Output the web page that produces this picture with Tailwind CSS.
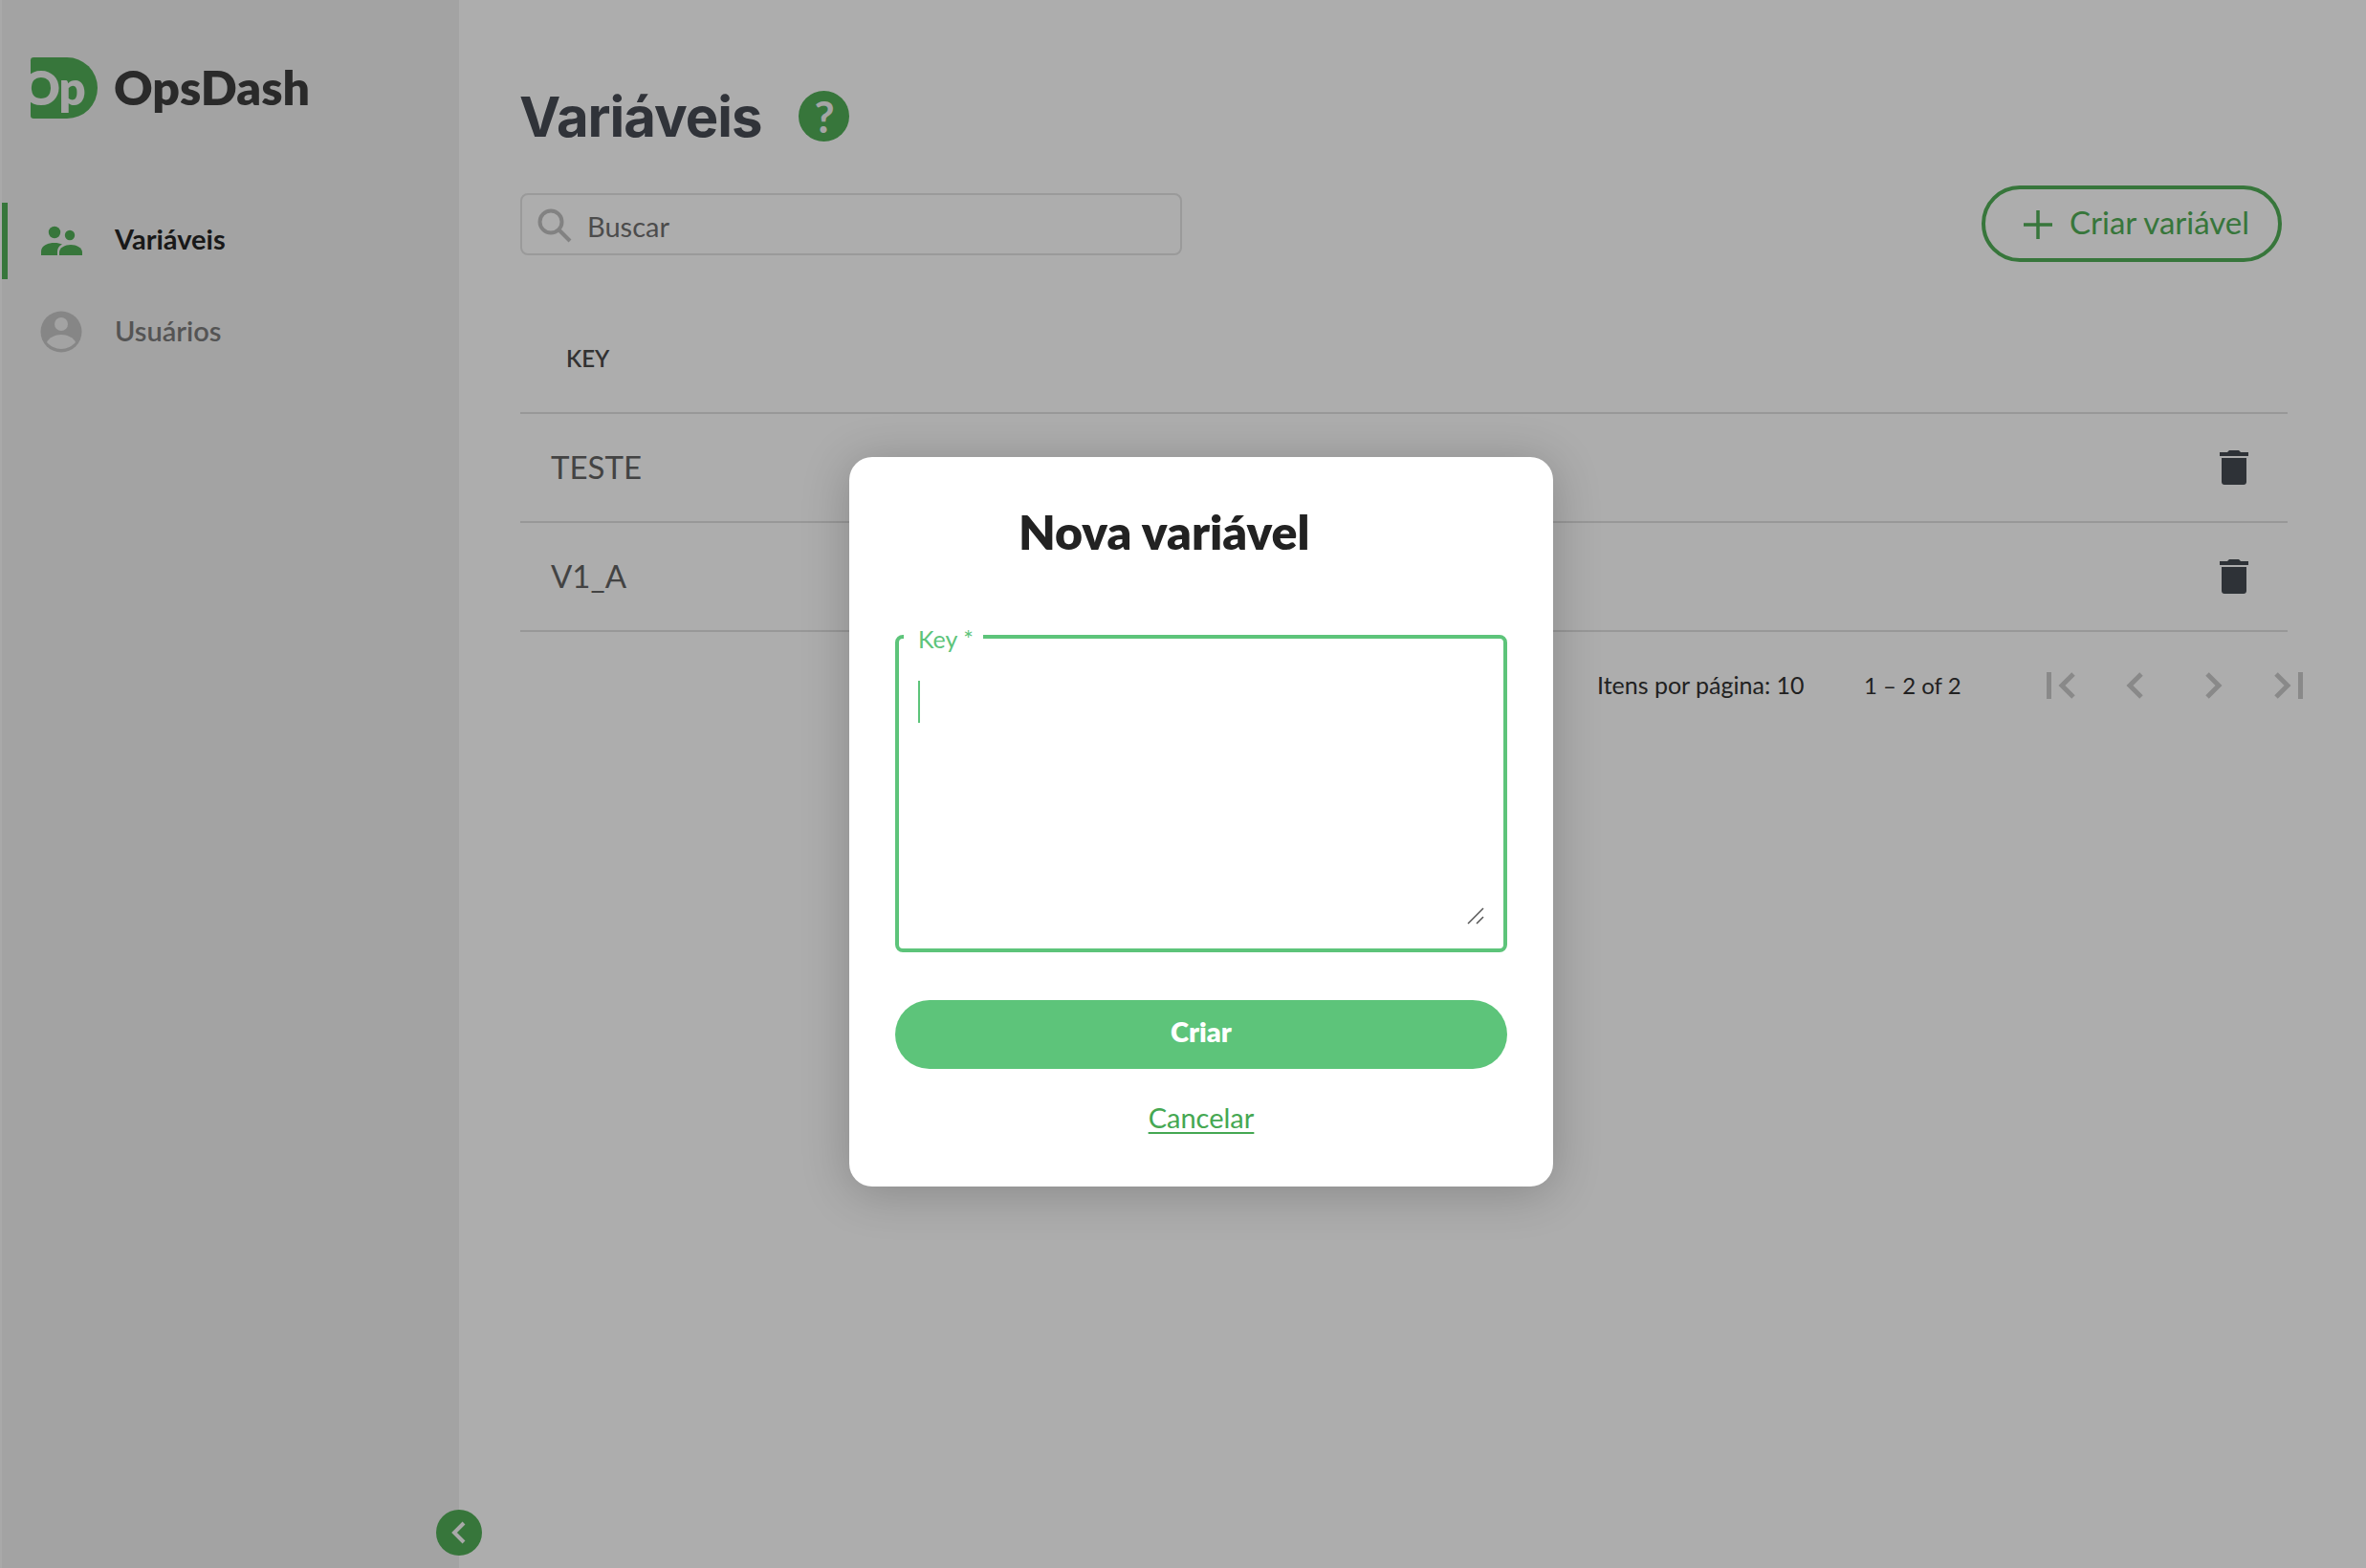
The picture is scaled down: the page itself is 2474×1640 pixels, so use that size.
<!DOCTYPE html>
<html lang="pt-BR">
<head>
  <meta charset="UTF-8" />
  <title>OpsDash</title>
  <script src="https://cdn.jsdelivr.net/npm/@tailwindcss/browser@4"></script>
</head>
<body class="bg-white font-['Lato','Noto_Sans',sans-serif] overflow-hidden">
  <div class="relative flex w-[2474px] h-[1640px] overflow-hidden">

    <!-- SIDEBAR -->
    <aside class="w-[480px] shrink-0 bg-[#f0f0f0] border-l-2 border-[#fafafa] flex flex-col">
      <div class="flex items-center h-[64px] mt-[60px] pl-[30px]">
        <div class="w-[70px] h-[64px] bg-[#52ae58] rounded-l-[4px] rounded-r-[40px] overflow-hidden flex items-center">
          <span class="ml-[-9px] mt-[-2px] text-[49px] leading-none font-extrabold text-[#f0f0f0] tracking-[-1px]">Op</span>
        </div>
        <span class="ml-[17px] mt-[-2px] text-[50px] leading-none font-extrabold text-[#3f3f3f]">OpsDash</span>
      </div>

      <nav class="mt-[88px] flex flex-col">
        <a class="flex items-center h-[80px] border-l-[6px] border-[#52ae58] pl-[34px]">
          <svg class="w-[44px] h-[32px] shrink-0" viewBox="0 0 44 32" fill="#52ae58">
            <circle cx="15" cy="7" r="6.2" /><circle cx="31" cy="10" r="5.2" />
            <path d="M1 31v-4c0-6 7-9 14-9 3 0 6 .6 8 1.6-3 1.6-5 4-5 7.4v4z" />
            <path d="M20 31v-3c0-5 6-8 12-8s12 3 12 8v3z" />
          </svg>
          <span class="ml-[34px] mt-[-4px] text-[29px] font-bold text-[#262626]">Variáveis</span>
        </a>
        <a class="flex items-center h-[80px] mt-[16px] pl-[40px]">
          <svg class="w-[44px] h-[44px] shrink-0 mt-[-2px]" viewBox="0 0 44 44">
            <circle cx="22" cy="22" r="21.5" fill="#c6c6c6" />
            <circle cx="22" cy="14" r="7" fill="#f0f0f0" />
            <path d="M7 33c2-5 9-8 15-8s13 3 15 8c-3.500 4-9 7-15 7s-11.500-3-15-7z" fill="#f0f0f0" />
          </svg>
          <span class="ml-[34px] mt-[-4px] text-[29px] font-semibold text-[#7d7d7d]">Usuários</span>
        </a>
      </nav>
    </aside>

    <!-- MAIN -->
    <main class="flex-1 pl-[64px] pr-[82px] bg-white">
      <div class="flex items-center h-[53px] mt-[95px]">
        <h1 class="ml-[-1px] font-['Inter',sans-serif] text-[58px] leading-none font-bold text-[#484c55] tracking-[-1px]">Variáveis</h1>
        <div class="ml-[39px] w-[53px] h-[53px] rounded-full bg-[#52ae58] flex items-center justify-center text-[#f4f4f4] text-[46px] font-bold leading-none">?</div>
      </div>

      <div class="flex items-center justify-between h-[80px] mt-[46px]">
        <div class="flex items-center w-[692px] h-[65px] border-2 border-[#e3e3e3] rounded-[8px] pl-[16px]">
          <svg class="w-[36px] h-[36px] mt-[3px]" viewBox="0 0 36 36" fill="none" stroke="#c0c0c0" stroke-width="4">
            <circle cx="14" cy="14" r="11.500" /><path d="M22.500 22.500L34 34" />
          </svg>
          <span class="ml-[16px] mt-[5px] text-[29px] text-[#717171]">Buscar</span>
        </div>
        <button class="flex items-center w-[314px] h-[80px] mr-[6px] border-[4px] border-[#52ae58] rounded-full pl-[40px] text-[#52ae58]">
          <svg class="w-[30px] h-[30px] mt-[2px]" viewBox="0 0 30 30" stroke="#52ae58" stroke-width="3.500"><path d="M15 0v30M0 15h30" /></svg>
          <span class="ml-[18px] mt-[-3px] text-[33px] leading-none font-normal whitespace-nowrap">Criar variável</span>
        </button>
      </div>

      <div class="flex items-center h-[159px] pt-[45px] pl-[48px] border-b-2 border-[#e0e0e0]">
        <span class="text-[24px] font-semibold text-[#4b4b4b]">KEY</span>
      </div>
      <div class="flex items-center justify-between h-[114px] pl-[32px] pr-[41px] border-b-2 border-[#e0e0e0]">
        <span class="text-[33px] text-[#646464]">TESTE</span>
        <svg class="w-[30px] h-[36px]" viewBox="0 0 30 36" fill="#454a51"><path d="M10 0h10l2 2h8v4H0V2h8zM2 8h26v25c0 1.700-1.300 3-3 3H5c-1.700 0-3-1.300-3-3z" /></svg>
      </div>
      <div class="flex items-center justify-between h-[114px] pl-[32px] pr-[41px] border-b-2 border-[#e0e0e0]">
        <span class="text-[33px] text-[#646464]">V1_A</span>
        <svg class="w-[30px] h-[36px]" viewBox="0 0 30 36" fill="#454a51"><path d="M10 0h10l2 2h8v4H0V2h8zM2 8h26v25c0 1.700-1.300 3-3 3H5c-1.700 0-3-1.300-3-3z" /></svg>
      </div>

      <div class="flex items-center h-[112px] pl-[1126px] mr-[-20px] text-[#323232]">
        <span class="w-[279px] text-[25px] whitespace-nowrap">Itens por página: 10</span>
        <span class="w-[191px] text-[24px] whitespace-nowrap">1 – 2 of 2</span>
        <div class="flex items-center gap-[52px]">
          <svg class="w-[30px] h-[28px]" viewBox="0 0 30 28" fill="none" stroke="#cbcbcb" stroke-width="5"><path d="M2.500 0v28M28 2L16 14l12 12" /></svg>
          <svg class="w-[18px] h-[28px] ml-[1px]" viewBox="0 0 18 28" fill="none" stroke="#cbcbcb" stroke-width="5"><path d="M16 2L4 14l12 12" /></svg>
          <svg class="w-[18px] h-[28px] ml-[13px]" viewBox="0 0 18 28" fill="none" stroke="#cbcbcb" stroke-width="5"><path d="M2 2l12 12L2 26" /></svg>
          <svg class="w-[30px] h-[28px] ml-[2px]" viewBox="0 0 30 28" fill="none" stroke="#cbcbcb" stroke-width="5"><path d="M27.500 0v28M2 2l12 12L2 26" /></svg>
        </div>
      </div>
    </main>

    <!-- collapse button -->
    <button class="absolute left-[456px] top-[1579px] w-[48px] h-[48px] rounded-full bg-[#52ae58] flex items-center justify-center">
      <svg class="w-[16px] h-[24px]" viewBox="0 0 16 24" fill="none" stroke="#fafafa" stroke-width="4"><path d="M13 2L3 12l10 10" /></svg>
    </button>

    <!-- BACKDROP + DIALOG -->
    <div class="absolute inset-0 bg-black/32"></div>
    <div class="absolute left-[888px] top-[478px] w-[736px] h-[763px] bg-white rounded-[24px] shadow-[0_6px_50px_rgba(0,0,0,0.22)] px-[48px] flex flex-col">
      <h2 class="mt-[48px] ml-[129px] h-[62px] text-[50px] leading-[60px] font-extrabold text-[#222222] whitespace-nowrap">Nova variável</h2>

      <div class="relative mt-[76px] h-[332px] border-[4px] border-[#5dc47a] rounded-[8px]">
        <label class="absolute left-[5px] top-[-13px] bg-white pl-[15px] pr-[10px] h-[26px] text-[25px] leading-[26px] text-[#5dc47a]">Key *</label>
        <div class="absolute left-[20px] top-[44px] w-[2px] h-[44px] bg-[#5dc47a]"></div>
        <svg class="absolute left-[594px] top-[281px] w-[18px] h-[18px]" viewBox="0 0 18 18" stroke="#555555" stroke-width="1.500"><path d="M1 17L17 1M10 17l7-7" /></svg>
      </div>

      <button class="mt-[50px] h-[72px] rounded-full bg-[#5dc47a] text-white text-[29px] font-extrabold pb-[6px]">Criar</button>
      <a class="mt-[31px] self-center text-[29px] leading-[40px] text-[#45a852] underline underline-offset-[4px]">Cancelar</a>
    </div>
  </div>
</body>
</html>
